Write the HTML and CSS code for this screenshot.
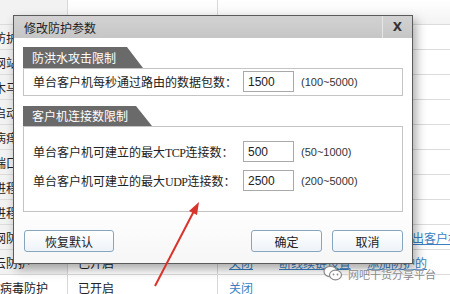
FILE: index.html
```html
<!DOCTYPE html>
<html lang="zh-CN">
<head>
<meta charset="utf-8">
<title>修改防护参数</title>
<link rel="stylesheet" href="styles.css">
</head>
<body>
<div class="page">
  <div class="table">
    <div class="trow top"><div class="c1"></div><div class="c2"></div><div class="c3"></div></div>
    <div class="trow"><div class="c1">防护</div><div class="c2"></div><div class="c3"></div></div>
    <div class="trow"><div class="c1">网站设置</div><div class="c2"></div><div class="c3"></div></div>
    <div class="trow"><div class="c1">木马攻击</div><div class="c2"></div><div class="c3"></div></div>
    <div class="trow"><div class="c1">启动护</div><div class="c2"></div><div class="c3"></div></div>
    <div class="trow"><div class="c1">病痒护</div><div class="c2"></div><div class="c3"></div></div>
    <div class="trow"><div class="c1">端口护</div><div class="c2"></div><div class="c3"></div></div>
    <div class="trow"><div class="c1">进程护</div><div class="c2"></div><div class="c3"></div></div>
    <div class="trow"><div class="c1">进程保</div><div class="c2"></div><div class="c3"></div></div>
    <div class="trow"><div class="c1">网防护</div><div class="c2"></div><div class="c3"><span class="link l4">退出客户机</span></div></div>
    <div class="trow"><div class="c1">云防护</div><div class="c2">已开启</div><div class="c3"><span class="link l1">关闭</span><span class="link l2">断线续链设置</span><span class="link l3">添加防护的</span></div></div>
    <div class="trow"><div class="c1 full">病毒防护</div><div class="c2">已开启</div><div class="c3"><span class="link l1">关闭</span></div></div>
  </div>

  <div class="dialog">
    <div class="titlebar">
      <span class="title">修改防护参数</span>
      <span class="close">X</span>
    </div>
    <div class="body">
      <div class="tab tab1">防洪水攻击限制</div>
      <div class="box box1">
        <div class="row">
          <span class="label">单台客户机每秒通过路由的数据包数：</span>
          <span class="input">1500</span>
          <span class="range">(100~5000)</span>
        </div>
      </div>
      <div class="tab tab2">客户机连接数限制</div>
      <div class="box box2">
        <div class="row">
          <span class="label">单台客户机可建立的最大<span class="latin">TCP</span>连接数：</span>
          <span class="input">500</span>
          <span class="range">(50~1000)</span>
        </div>
        <div class="row">
          <span class="label">单台客户机可建立的最大<span class="latin">UDP</span>连接数：</span>
          <span class="input">2500</span>
          <span class="range">(200~5000)</span>
        </div>
      </div>
      <div class="buttons">
        <span class="btn wide">恢复默认</span>
        <span class="spacer"></span>
        <span class="btn">确定</span>
        <span class="btn">取消</span>
      </div>
    </div>
  </div>

  <svg class="arrow" width="450" height="294" viewBox="0 0 450 294">
    <line x1="155" y1="286" x2="194" y2="211" stroke="#d8342c" stroke-width="2"/>
    <polygon points="199,202 197,215 189,211" fill="#d8342c"/>
  </svg>

  <div class="watermark">
    <svg class="wx" width="20" height="17" viewBox="0 0 20 17">
      <ellipse cx="7.5" cy="6.5" rx="6.5" ry="5.2" fill="#fff" stroke="#8a8a8a" stroke-width="1.2"/>
      <ellipse cx="12.5" cy="10" rx="6" ry="4.8" fill="#fff" stroke="#8a8a8a" stroke-width="1.2"/>
      <circle cx="10.5" cy="9.5" r="0.9" fill="#8a8a8a"/>
      <circle cx="14.5" cy="9.5" r="0.9" fill="#8a8a8a"/>
    </svg>
    <span class="wmtext">网吧干货分享平台</span>
  </div>
</div>
</body>
</html>
```

FILE: styles.css
```css
html, body {
  margin: 0;
  padding: 0;
}
body {
  width: 450px;
  height: 294px;
  overflow: hidden;
  background: #ffffff;
  font-family: "Noto Sans CJK SC", "Liberation Sans", sans-serif;
  font-size: 12px;
  color: #222;
}
.page {
  position: relative;
  width: 450px;
  height: 294px;
  overflow: hidden;
}

/* background table */
.table {
  display: flex;
  flex-direction: column;
}
.trow {
  display: grid;
  grid-template-columns: 68px 150px 1fr;
  height: 25px;
  box-sizing: border-box;
  border-bottom: 1px solid #dcdcdc;
}
.trow.top {
  background: linear-gradient(#ffffff, #f3f3f3);
}
.c1, .c2, .c3 {
  display: flex;
  align-items: center;
  white-space: nowrap;
  overflow: hidden;
  box-sizing: border-box;
}
.c1 {
  background: #f2f2f2;
  border-right: 1px solid #d8d8d8;
  text-indent: -6px;
}
.c1.full {
  text-indent: 0;
  background: #ffffff;
}
.c2 {
  padding-left: 10px;
  border-right: 1px solid #d8d8d8;
}
.c3 {
  position: relative;
}
.link {
  color: #3a7fc4;
  text-decoration: underline;
  white-space: nowrap;
}
.l1 { margin-left: 11px; }
.l2 { margin-left: 26px; }
.l3 { margin-left: 16px; }
.l4 { margin-left: 182px; }

/* dialog */
.dialog {
  position: absolute;
  left: 13px;
  top: 15px;
  width: 400px;
  height: 249px;
  box-sizing: border-box;
  border: 1px solid #5b5b5b;
  background: #ffffff;
  box-shadow: 3px 5px 10px rgba(0, 0, 0, 0.35);
  display: flex;
  flex-direction: column;
}
.titlebar {
  height: 22px;
  flex: none;
  display: flex;
  align-items: center;
  background: linear-gradient(#d2d2d2, #c6c6c6);
}
.title {
  padding-left: 10px;
  flex: 1;
  color: #1e1e1e;
}
.close {
  width: 30px;
  height: 22px;
  box-sizing: border-box;
  border-left: 1px solid #e6e6e6;
  display: flex;
  align-items: center;
  justify-content: center;
  font-family: "DejaVu Sans", sans-serif;
  font-weight: bold;
  font-size: 12px;
  color: #333;
}
.body {
  flex: 1;
  padding: 9px 9px 0;
  display: flex;
  flex-direction: column;
  background: linear-gradient(#ffffff 75%, #f6f6f6);
}
.tab {
  height: 21px;
  line-height: 21px;
  padding-left: 9px;
  color: #ffffff;
  background: #6a6a6a;
  clip-path: polygon(0 0, calc(100% - 16px) 0, 100% 100%, 0 100%);
  box-sizing: border-box;
}
.tab1 { width: 120px; }
.tab2 { width: 129px; margin-top: 10px; height: 20px; line-height: 20px; }
.box {
  border: 1px solid #c4c4c4;
  display: flex;
  flex-direction: column;
}
.box1 {
  padding: 2px 0 3px;
}
.box2 {
  padding: 14px 0 20px;
  gap: 8px;
}
.row {
  display: flex;
  align-items: center;
  height: 21px;
}
.label {
  width: 219px;
  box-sizing: border-box;
  padding-left: 9px;
  white-space: nowrap;
  font-size: 12px;
}
.latin {
  font-family: "Liberation Serif", serif;
  font-size: 12px;
  letter-spacing: -0.5px;
}
.input {
  width: 51px;
  height: 21px;
  box-sizing: border-box;
  border: 1px solid #a9a9a9;
  padding-left: 4px;
  display: flex;
  align-items: center;
  font-family: "Liberation Sans", sans-serif;
  font-size: 12px;
  color: #222;
}
.range {
  margin-left: 7px;
  font-family: "Liberation Sans", sans-serif;
  font-size: 11px;
  color: #333;
}
.buttons {
  margin-top: 18px;
  display: flex;
  align-items: center;
  gap: 10px;
}
.spacer { flex: 1; }
.btn {
  width: 71px;
  height: 22px;
  box-sizing: border-box;
  border: 1px solid #86a6c0;
  border-radius: 3px;
  background: linear-gradient(#ffffff, #eef3f8);
  display: flex;
  align-items: center;
  justify-content: center;
  color: #222;
}
.btn.wide {
  width: 90px;
  margin-left: 1px;
}

/* overlays */
.arrow {
  position: absolute;
  left: 0;
  top: 0;
}
.watermark {
  position: absolute;
  left: 323px;
  top: 265px;
  display: flex;
  align-items: center;
  gap: 5px;
}
.wmtext {
  font-size: 11px;
  color: #8a8a8a;
  text-shadow: 0 0 2px #fff, 0 0 2px #fff;
}
```
